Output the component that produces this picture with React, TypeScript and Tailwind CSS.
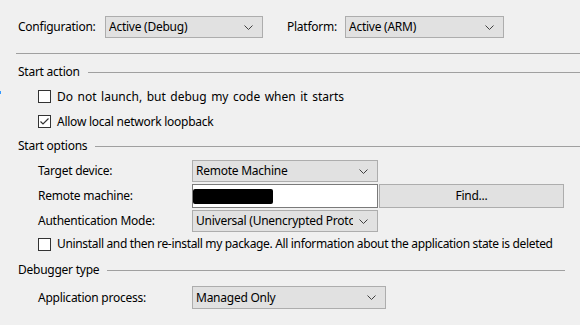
import React from 'react';

const Chevron = () => (
  <svg width="9" height="5" viewBox="0 0 9 5" className="shrink-0">
    <path d="M0.5 0.5 L4.5 4.5 L8.5 0.5" fill="none" stroke="#404040" strokeWidth="1" />
  </svg>
);

const Select = ({ value, width }: { value: string; width: string }) => (
  <div className={`${width} h-full flex items-center border border-[#adadad] bg-[#e1e1e1] pl-[3px] pr-[9px]`}>
    <span className="flex-1 overflow-hidden whitespace-nowrap mr-[6px]">{value}</span>
    <Chevron />
  </div>
);

const CheckBox = ({ checked, label, textClass }: { checked?: boolean; label: string; textClass?: string }) => (
  <div className="flex items-center h-full pl-[38px]">
    <div className="w-[13px] h-[13px] shrink-0 border border-[#333] bg-white flex items-center justify-center">
      {checked && (
        <svg width="11" height="11" viewBox="0 0 11 11">
          <path d="M1.5 5.5 L4 8 L9.5 2.5" fill="none" stroke="#333" strokeWidth="1.2" />
        </svg>
      )}
    </div>
    <span className={`ml-[6px] whitespace-nowrap ${textClass ?? ''}`}>{label}</span>
  </div>
);

const SectionHeader = ({ title, className }: { title: string; className?: string }) => (
  <div className={`flex items-center h-[16px] pl-[18px] ${className ?? ''}`}>
    <span className="whitespace-nowrap">{title}</span>
    <div className="flex-1 h-px bg-[#a0a0a0] ml-[8px]" />
  </div>
);

const Row = ({ label, children, className }: { label: string; children: React.ReactNode; className?: string }) => (
  <div className={`flex items-center pl-[38px] ${className ?? ''}`}>
    <span className="w-[154px] shrink-0 whitespace-nowrap">{label}</span>
    {children}
  </div>
);

export default function App() {
  return (
    <div
      className="w-[580px] h-[325px] bg-[#f0f0f0] text-black text-[12px] leading-[16px] tracking-[-0.25px] pt-4 overflow-hidden relative"
      style={{ fontFamily: '"Noto Sans", "Open Sans", sans-serif' }}
    >
      <div className="absolute left-0 top-[91px] w-px h-[3px] bg-[#3399ff]" />
      {/* top bar */}
      <div className="flex items-center h-[22px] pl-[18px]">
        <span className="w-[87px] whitespace-nowrap">Configuration:</span>
        <Select value="Active (Debug)" width="w-[158px]" />
        <span className="ml-[24px] w-[58px] whitespace-nowrap">Platform:</span>
        <Select value="Active (ARM)" width="w-[159px]" />
      </div>
      <div className="mt-[15px] ml-[16px] h-px bg-[#a0a0a0]" />

      <SectionHeader title="Start action" className="mt-[10px]" />
      <div className="mt-[4px] h-[25px]">
        <CheckBox
          label="Do not launch, but debug my code when it starts"
          textClass="tracking-normal [word-spacing:1.4px]"
        />
      </div>
      <div className="h-[25px]">
        <CheckBox checked label="Allow local network loopback" />
      </div>

      <SectionHeader title="Start options" className="mt-[4px]" />
      <Row label="Target device:" className="mt-[6px] h-[22px]">
        <Select value="Remote Machine" width="w-[186px]" />
      </Row>
      <Row label="Remote machine:" className="mt-[2px] h-[24px]">
        <div className="w-[186px] h-full border border-[#7a7a7a] bg-white flex items-center">
          <div className="w-[80px] h-[15px] bg-black rounded-[2px]" />
        </div>
        <div className="ml-px w-[185px] h-full border border-[#adadad] bg-[#e1e1e1] flex items-center justify-center">
          Find...
        </div>
      </Row>
      <Row label="Authentication Mode:" className="mt-[2px] h-[22px]">
        <Select value="Universal (Unencrypted Protocol)" width="w-[186px]" />
      </Row>
      <div className="mt-[4px] h-[16px]">
        <CheckBox
          label="Uninstall and then re-install my package. All information about the application state is deleted"
          textClass="tracking-[-0.34px]"
        />
      </div>

      <SectionHeader title="Debugger type" className="mt-[10px] pr-[15px]" />
      <Row label="Application process:" className="mt-[8px] h-[23px]">
        <Select value="Managed Only" width="w-[194px]" />
      </Row>
    </div>
  );
}
